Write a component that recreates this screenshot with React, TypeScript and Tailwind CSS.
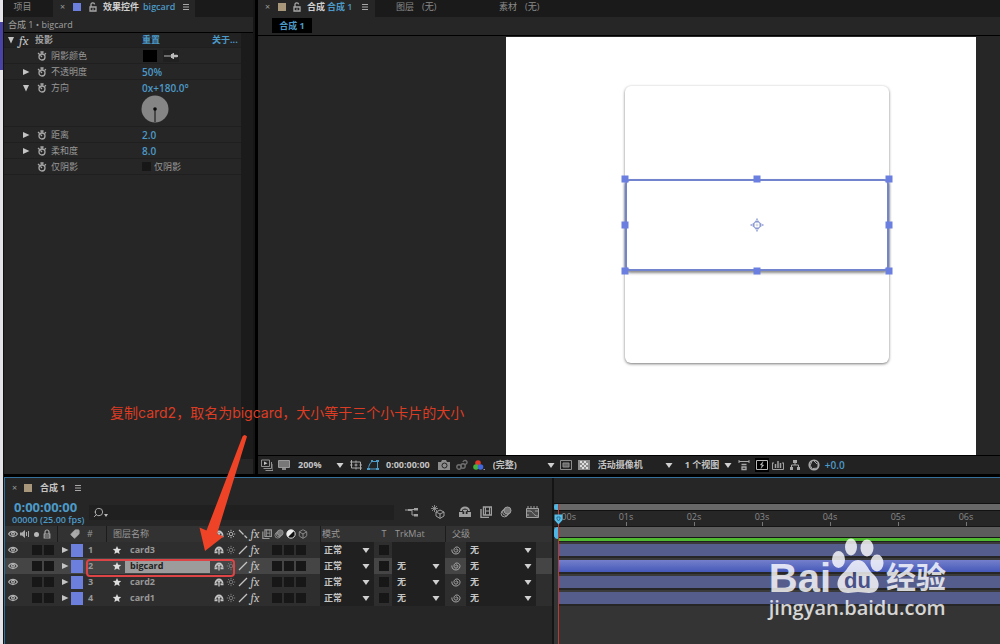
import type { ReactNode } from "react";
import { Search, Tag, Box } from "lucide-react";

const effectRows = [
  { name: "距离", value: "2.0" },
  { name: "柔和度", value: "8.0" },
];

const layers = [
  { id: 1, name: "card3", trkMat: false, selected: false },
  { id: 2, name: "bigcard", trkMat: true, selected: true },
  { id: 3, name: "card2", trkMat: true, selected: false },
  { id: 4, name: "card1", trkMat: true, selected: false },
];

const seconds = ["01s", "02s", "03s", "04s", "05s", "06s"];

const handles = [
  "left-0 top-0",
  "left-1/2 top-0",
  "left-full top-0",
  "left-0 top-1/2",
  "left-full top-1/2",
  "left-0 top-full",
  "left-1/2 top-full",
  "left-full top-full",
];

function Triangle({ open = false }: { open?: boolean }) {
  return (
    <svg viewBox="0 0 8 8" className="size-2 shrink-0 fill-[#c4c4c4]">
      {open ? <path d="M1 1h6L4 7.5z" /> : <path d="M1 1l6.5 3L1 7z" />}
    </svg>
  );
}

function Caret() {
  return (
    <svg viewBox="0 0 8 5" className="h-[5px] w-2 shrink-0 fill-[#d0d0d0]">
      <path d="M0.5 0h7L4 5z" />
    </svg>
  );
}

function Stopwatch() {
  return (
    <svg viewBox="0 0 10 10" className="size-[10px] shrink-0" fill="none" stroke="#a8a8a8" strokeWidth="1.3">
      <circle cx="5" cy="6" r="3" />
      <path d="M3.4 1h3.2M5 1v2M1 2l1.6 1.4M5 6l-1.6-1.6M8.9 2.2L7.8 3.3" />
    </svg>
  );
}

function Unlock() {
  return (
    <svg viewBox="0 0 8 10" className="h-[10px] w-2 shrink-0" fill="none" stroke="#a8a8a8" strokeWidth="1.3">
      <path d="M2 5V2.8a1.8 1.8 0 0 1 3.6-.4M1 5h6v4H1zM4 6.4v1.4" />
    </svg>
  );
}

function Padlock() {
  return (
    <svg viewBox="0 0 8 10" className="h-[10px] w-2 shrink-0" fill="none" stroke="#a8a8a8" strokeWidth="1.2">
      <path d="M2 5V3a2 2 0 0 1 4 0v2M1.2 5h5.600v4H1.200zM2 7h4" />
    </svg>
  );
}

function Menu() {
  return (
    <svg viewBox="0 0 6 8" className="h-2 w-[6px] shrink-0" stroke="#a8a8a8">
      <path d="M0 1.5h6M0 4h6M0 6.5h6" />
    </svg>
  );
}

function Eye() {
  return (
    <svg viewBox="0 0 10 8" className="h-2 w-[10px] shrink-0" fill="none" stroke="#b0b0b0" strokeWidth="1.2">
      <path d="M.6 4C2.5.4 7.5.4 9.4 4 7.5 7.4 2.5 7.4.6 4z" />
      <circle cx="5" cy="3.7" r="1.4" />
    </svg>
  );
}

function Shy() {
  return (
    <svg viewBox="0 0 10 9" className="h-[9px] w-[10px] shrink-0" fill="none" stroke="#c4c4c4">
      <path d="M1.500 5a3.500 3.500 0 0 1 7 0" strokeWidth="1.800" />
      <path d="M.5 6.200h3M6.500 6.200h3" strokeWidth="2" />
      <path d="M5 3v5.500M3.500 3.500h3" strokeWidth="1.400" />
    </svg>
  );
}

function Sun({ dim = false }: { dim?: boolean }) {
  return (
    <svg viewBox="0 0 10 10" className="size-[10px] shrink-0" fill="none" stroke={dim ? "#777" : "#b0b0b0"}>
      <circle cx="5" cy="5" r="1.8" />
      <path d="M5 .8v1.4M5 7.8v1.4M.8 5h1.4M7.8 5h1.4M2 2l1 1M7 7l1 1M8 2L7 3M3 7L2 8" />
    </svg>
  );
}

function Slash({ back = false }: { back?: boolean }) {
  return (
    <svg viewBox="0 0 10 10" className="size-[10px] shrink-0" fill="none" stroke="#c4c4c4" strokeWidth="1.3">
      {back ? <path d="M1 1l4.5 4.5M6.5 6.5L9 9" /> : <path d="M1 9l8-8" />}
    </svg>
  );
}

function Fx() {
  return <i className="w-[10px] shrink-0 text-center font-serif text-[12px] leading-none text-[#c4c4c4]">fx</i>;
}

function Spiral() {
  return (
    <svg viewBox="0 0 10 10" className="size-[10px] shrink-0" fill="none" stroke="#a8a8a8">
      <path d="M5.2 5.2c-.8-.6-.1-1.6.8-1.2 1.5.7.9 3-.8 3.1C2.700 7.200 2.300 3.700 4.200 2.500 6.500 1.100 9.200 2.900 9 5.400 8.700 8.400 5.700 9.600 3.200 8.700 1.500 8 .700 6.300.900 4.500" />
    </svg>
  );
}

function MotionBlur() {
  return (
    <svg viewBox="0 0 12 12" className="size-full" fill="none" stroke="currentColor">
      <circle cx="4.500" cy="7.500" r="3.400" />
      <circle cx="6" cy="6" r="3.400" />
      <circle cx="7.500" cy="4.500" r="3.500" fill="#777" />
    </svg>
  );
}

function Film() {
  return (
    <svg viewBox="0 0 12 12" className="size-full" fill="none" stroke="currentColor">
      <path d="M3.500 1h8v8h-8zM1 3v8.500h8" strokeWidth="1.400" />
      <path d="M5.500 1v8M9.500 1v8M5.500 5h4" />
    </svg>
  );
}

function Cell({ label }: { label: string }) {
  return (
    <input type="checkbox" aria-label={label} className="size-[10px] shrink-0 appearance-none bg-[#171717]" />
  );
}

function Drop({ label, value, className }: { label: string; value: string; className: string }) {
  return (
    <div className={`relative flex items-center ${className}`}>
      <select
        aria-label={label}
        className="w-full appearance-none bg-transparent font-bold text-[#c4c4c4] outline-none"
      >
        <option>{value}</option>
      </select>
      <span className="pointer-events-none absolute right-1">
        <Caret />
      </span>
    </div>
  );
}

function Property({ name, open, children }: { name: string; open?: boolean; children: ReactNode }) {
  return (
    <div className="flex h-[15px] items-center">
      <span className="w-[15px]">{open !== undefined && <Triangle open={open} />}</span>
      <Stopwatch />
      <span className="ml-1 w-[91px] text-[#989898]">{name}</span>
      {children}
    </div>
  );
}

function Value({ children }: { children: ReactNode }) {
  return <button className="text-[10px] font-semibold text-[#4c9ac8]">{children}</button>;
}

function EffectPanel() {
  return (
    <section className="flex w-[251px] shrink-0 flex-col border-r-2 border-[#161616] bg-[#262626]">
      <div className="flex h-[17px] bg-[#1a1a1a] pb-1">
        <button className="w-[49px] pr-3 text-[#8a8a8a]">项目</button>
        <div className="-mb-1 flex w-[142px] items-center bg-[#262626] pb-1 pl-[7px]">
          <button className="w-[13px] text-left text-[#999]">×</button>
          <span className="mr-2 size-2 bg-[#6d7fdc]" />
          <Unlock />
          <b className="ml-[6px] text-[#d0d0d0]">效果控件</b>
          <span className="ml-1 mr-2 font-semibold text-[#4c9ac8]">bigcard</span>
          <Menu />
        </div>
      </div>
      <div className="h-4 border-b border-black pl-1 leading-4 text-[#a0a0a0]">合成 1 • bigcard</div>
      <div className="mb-[15px] flex-1 border-r-[12px] border-[#1b1b1b]">
        <div className="flex h-[14px] items-center bg-[#222] pl-[3px] text-[#a0a0a0]">
          <Triangle open />
          <span className="ml-1 w-4 font-serif text-[13px] italic leading-none text-[#c4c4c4]">fx</span>
          <span className="w-[107px] font-bold">投影</span>
          <button className="w-[70px] text-left font-bold text-[#4c9ac8]">重置</button>
          <button className="font-bold text-[#4c9ac8]">关于...</button>
        </div>
        <div className="border-t border-[#1f1f1f] *:border-b *:border-[#1f1f1f] *:pl-[18px]">
          <div>
            <Property name="阴影颜色">
              <button aria-label="阴影颜色" className="ml-px h-3 w-[14px] bg-black" />
              <button aria-label="吸管" className="ml-[6px] flex h-3 w-4 items-center justify-center bg-[#202020]">
                <svg viewBox="0 0 14 6" className="h-[6px] w-[14px] fill-[#b8b8b8]">
                  <path d="M0 2.600h7V1h1.500V0H10v1.800h3a1 1 0 0 1 0 2.400h-3V6H8.500V5H7V3.600H0z" />
                </svg>
              </button>
            </Property>
          </div>
          <div>
            <Property name="不透明度" open={false}>
              <Value>50%</Value>
            </Property>
          </div>
          <div className="pb-[3px]">
            <Property name="方向" open>
              <Value>0x+180.0°</Value>
            </Property>
            <svg viewBox="0 0 28 28" className="ml-[119px] size-7">
              <circle cx="14" cy="14" r="13.500" fill="#858585" />
              <path d="M14 14v13" stroke="#0a0a0a" />
              <circle cx="14" cy="14" r="1.800" fill="#0a0a0a" />
            </svg>
          </div>
          {effectRows.map((row) => (
            <div key={row.name}>
              <Property name={row.name} open={false}>
                <Value>{row.value}</Value>
              </Property>
            </div>
          ))}
          <div>
            <Property name="仅阴影">
              <label className="flex items-center gap-[3px] text-[#989898]">
                <input type="checkbox" className="size-[9px] appearance-none bg-[#171717]" />
                仅阴影
              </label>
            </Property>
          </div>
        </div>
      </div>
    </section>
  );
}

function ViewerBar() {
  return (
    <div className="flex h-[19px] items-center overflow-hidden border-t border-black bg-[#222] pl-[3px] font-bold text-[#c4c4c4] *:shrink-0">
      <svg viewBox="0 0 12 12" className="mr-[5px] size-3" fill="none" stroke="#909090">
        <path d="M.5 1h8v6.500h-8zM10.500 3v6.500h-8M12 5v6.500H4.500" />
        <path d="M3 2.500v3.500L6.500 4.200z" fill="#c4c4c4" stroke="none" />
      </svg>
      <svg viewBox="0 0 12 10" className="mr-2 h-[10px] w-3">
        <path d="M.5.500h11v7H.5z" fill="#777" stroke="#999" />
        <path d="M4 8h4v2H4z" fill="#888" />
      </svg>
      <Drop label="缩放" value="200%" className="w-[50px]" />
      <svg viewBox="0 0 12 10" className="ml-[2px] mr-[5px] h-[10px] w-3" fill="none" stroke="#aaa">
        <path d="M1.500 2h9v6h-9zM6 3.500v3M4.500 5h3M0 2h1.500M10.500 8H12M1.500 0v2M10.500 8v2M0 5h2.500M9.500 5H12M6 .5v2M6 7.500v2" />
      </svg>
      <svg viewBox="0 0 12 10" className="mr-[7px] h-[10px] w-3" fill="none" stroke="#4c9ac8">
        <path d="M1.500 9C1.500 5 4 2 5 1.500h5.500V9z" />
        <path d="M0 8h3v2H0zM9 0h3v2H9zM9 8h3v2H9zM4 0h2v2H4z" fill="#4c9ac8" stroke="none" />
      </svg>
      <button className="mr-2">0:00:00:00</button>
      <svg viewBox="0 0 12 10" className="mr-[6px] h-[10px] w-3">
        <path d="M0 2h3l1-2h4l1 2h3v8H0z" fill="#8c8c8c" />
        <circle cx="6.500" cy="5.500" r="2.500" fill="#8c8c8c" stroke="#222" />
      </svg>
      <svg viewBox="0 0 12 12" className="mr-[5px] size-3" fill="none" stroke="#6e6e6e" strokeWidth="1.400">
        <circle cx="3" cy="8" r="2.200" />
        <circle cx="7" cy="7" r="2.200" />
        <path d="M7 3a2 2 0 1 1 4 1L9 6" />
      </svg>
      <svg viewBox="0 0 12 10" className="mr-2 h-[10px] w-3">
        <circle cx="5" cy="3" r="2.800" fill="#dd3a2b" />
        <circle cx="3" cy="7" r="2.800" fill="#45b03c" />
        <circle cx="7.500" cy="7" r="2.800" fill="#4268dd" />
        <path d="M10.500 9h1.500v1h-1.500z" fill="#999" />
      </svg>
      <Drop label="分辨率" value="(完整)" className="w-[66px]" />
      <svg viewBox="0 0 12 10" className="ml-px mr-[6px] h-[10px] w-3" fill="none" stroke="#8c8c8c">
        <path d="M.5.500h11v9H.5z" />
        <path d="M3 3h6v4H3z" fill="#666" />
      </svg>
      <svg viewBox="0 0 12 10" className="mr-2 h-[10px] w-3">
        <path d="M0 0h12v10H0z" fill="#8c8c8c" />
        <path d="M2 1h2v2H2zM6 1h2v2H6zM4 3h2v2H4zM8 3h2v2H8zM2 5h2v2H2zM6 5h2v2H6zM4 7h2v2H4zM8 7h2v2H8z" fill="#ddd" />
      </svg>
      <Drop label="视图" value="活动摄像机" className="w-[79px]" />
      <Drop label="视图数量" value="1 个视图" className="ml-2 w-[51px]" />
      <svg viewBox="0 0 12 12" className="ml-[2px] mr-[5px] size-3" fill="none" stroke="#a8a8a8">
        <path d="M1 2.500h10M1 1v3M11 1v3" />
        <path d="M3.500 5.500h5M4 8h4v2.500H4z" strokeWidth="1.300" />
      </svg>
      <button aria-label="快速预览" className="mr-[3px] flex size-[14px] items-center justify-center bg-black">
        <svg viewBox="0 0 12 10" className="h-[10px] w-3" fill="none" stroke="#b8b8b8">
          <path d="M.5.500h11v9H.5z" />
          <path d="M7 1.500L4.200 5h3.600L5 8.500z" fill="#b8b8b8" strokeWidth=".4" />
        </svg>
      </button>
      <svg viewBox="0 0 12 10" className="mr-[5px] h-[10px] w-3" fill="none" stroke="#a0a0a0">
        <path d="M.5 3v6.500h11V3M0 3h2M10 3h2" />
        <path d="M3.500 8V4M6 8V1M8.500 8V3" strokeWidth="1.500" />
      </svg>
      <svg viewBox="0 0 12 12" className="mr-[7px] size-3" fill="#a8a8a8">
        <path d="M4 1h4v3H4zM1 8h3v3H1zM8 8h3v3H8z" />
        <path d="M6 4v2M2.500 8V6h7v2" fill="none" stroke="#a8a8a8" />
      </svg>
      <svg viewBox="0 0 12 12" className="mr-[5px] size-3" fill="none" stroke="#a8a8a8">
        <circle cx="6" cy="6" r="4.800" strokeWidth="1.600" />
        <path d="M5 1l4 4M10 4v5M10 9l-5 .5M5 11L2.500 7M2 7l2-5" />
      </svg>
      <button className="text-[10px] font-semibold text-[#4c9ac8]">+0.0</button>
    </div>
  );
}

function Viewer() {
  return (
    <section className="flex min-w-0 flex-1 flex-col bg-[#262626]">
      <div className="flex h-[17px] bg-[#1a1a1a] pb-1 text-[#8a8a8a]">
        <div className="-mb-1 flex w-[117px] shrink-0 items-center bg-[#262626] pb-1 pl-[7px]">
          <button className="w-[13px] text-left text-[#999]">×</button>
          <span className="mr-[7px] size-2 bg-[#a8977a]" />
          <Unlock />
          <b className="ml-[6px] text-[#d0d0d0]">合成</b>
          <span className="ml-[2px] mr-[9px] font-semibold text-[#4c9ac8]">合成 1</span>
          <Menu />
        </div>
        <button className="ml-[21px] flex w-[103px] items-center gap-2">
          <span>图层</span>
          <span>(无)</span>
        </button>
        <button className="flex items-center gap-2">
          <span>素材</span>
          <span>(无)</span>
        </button>
      </div>
      <div className="h-[19px] border-b border-black pl-[14px] pt-px">
        <button className="block h-[15px] w-[40px] bg-black font-bold leading-[15px] text-[#4c9ac8]">合成 1</button>
      </div>
      <div className="flex flex-1 justify-end pr-6 pt-px">
        <div className="flex w-[470px] flex-col items-center bg-white pt-[49px]">
          <div className="mr-[-31px] flex h-[277px] w-[264px] flex-col justify-center rounded-[6px] shadow-[0_1px_3px_#0008]">
            <div className="relative h-[92px] w-full">
              <div className="h-full rounded-[5px] border-2 border-[#7384cf] bg-white shadow-[0_2px_3px_#0007]" />
              {handles.map((place) => (
                <span key={place} className={`absolute size-[7px] -translate-x-1/2 -translate-y-1/2 bg-[#6a7fdf] ${place}`} />
              ))}
              <svg
                viewBox="0 0 14 14"
                className="absolute left-1/2 top-1/2 size-[14px] -translate-x-1/2 -translate-y-1/2"
                fill="none"
                stroke="#8090cf"
              >
                <circle cx="7" cy="7" r="3.500" />
                <path d="M7 .5l1.500 3.500h-3zM7 13.500l1.500-3.500h-3zM.5 7l3.500 1.500v-3zM13.500 7L10 8.500v-3z" strokeWidth=".7" />
                <path d="M5.500 7h3M7 5.500v3" stroke="#bbb" strokeWidth=".6" />
              </svg>
            </div>
          </div>
        </div>
      </div>
      <ViewerBar />
    </section>
  );
}

function LayerTable() {
  return (
    <table className="w-full table-fixed border-collapse text-[#989898]">
      <colgroup>
        <col className="w-[52px]" />
        <col className="w-[27px]" />
        <col className="w-[22px]" />
        <col className="w-[107px]" />
        <col className="w-[107px]" />
        <col className="w-[56px]" />
        <col className="w-[16px]" />
        <col className="w-[53px]" />
        <col />
      </colgroup>
      <thead>
        <tr className="h-4 bg-[#323232] text-left *:p-0 *:font-normal">
          <th>
            <div className="flex items-center gap-[2px] pl-[3px]">
              <Eye />
              <svg viewBox="0 0 10 8" className="h-2 w-[10px]" fill="#aaa">
                <path d="M0 2.500h2L5 0v8L2 5.500H0z" />
                <path d="M6.500 2v4M8.500 1v6" stroke="#aaa" />
              </svg>
              <span className="mx-[2px] size-[5px] rounded-full bg-[#b8b8b8]" />
              <Padlock />
            </div>
          </th>
          <th className="shadow-[inset_1px_0_#1c1c1c]">
            <Tag className="ml-[13px] size-[10px] -scale-x-100" fill="#aaa" />
          </th>
          <th className="pl-[3px]!">#</th>
          <th className="pl-[7px]! shadow-[inset_1px_0_#1c1c1c]">图层名称</th>
          <th>
            <div className="flex items-center gap-[2px] pl-px">
              <Shy />
              <Sun />
              <Slash back />
              <Fx />
              <span className="size-[10px]"><Film /></span>
              <span className="size-[10px]"><MotionBlur /></span>
              <svg viewBox="0 0 10 10" className="size-[10px]">
                <circle cx="5" cy="5" r="4.200" fill="#111" stroke="#ddd" />
                <path d="M8 2a4.200 4.200 0 0 0-6 6z" fill="#eee" />
              </svg>
              <Box className="size-[10px]" />
            </div>
          </th>
          <th className="pl-[2px]! shadow-[inset_1px_0_#1c1c1c]">模式</th>
          <th className="text-center">T</th>
          <th className="pl-[3px]!">TrkMat</th>
          <th className="pl-[7px]! shadow-[inset_1px_0_#1c1c1c]">父级</th>
        </tr>
      </thead>
      <tbody>
        {layers.map((layer) => (
          <tr key={layer.id} className={`h-4 *:p-0 ${layer.selected ? "bg-[#454545]" : "bg-[#2e2e2e]"}`}>
            <td>
              <div className="flex items-center gap-[2px] pl-[3px]">
                <Eye />
                <span className="ml-3 flex gap-[2px]">
                  <Cell label="独奏" />
                  <Cell label="锁定" />
                </span>
              </div>
            </td>
            <td>
              <div className="flex items-center gap-[2px] pl-1">
                <Triangle />
                <span className="h-[13px] w-3 bg-[#6d7fdc]" />
              </div>
            </td>
            <td className="pl-1! font-bold">{layer.id}</td>
            <td>
              <div className="flex items-center pl-[6px]">
                <svg viewBox="0 0 10 10" className="mr-[3px] size-[10px] fill-[#ddd]">
                  <path d="M5 1l1.200 2.700 3 .3-2.200 2 .6 3L5 7.500 2.400 9 3 6 .800 4l3-.3z" />
                </svg>
                <button
                  className={`h-[14px] w-[85px] pl-[5px] text-left font-bold ${layer.selected ? "bg-[#9c9c9c] text-[#222]" : ""}`}
                >
                  {layer.name}
                </button>
              </div>
            </td>
            <td>
              <div className="flex items-center gap-[2px] pl-px">
                <Shy />
                <Sun dim />
                <Slash />
                <Fx />
                <span className="ml-[10px] flex gap-[2px]">
                  <Cell label="运动模糊" />
                  <Cell label="调整图层" />
                  <Cell label="3D 图层" />
                </span>
              </div>
            </td>
            <td>
              <Drop label="模式" value="正常" className="h-4 w-[54px] bg-[#202020] pl-1" />
            </td>
            <td>
              <div className="flex justify-center">
                <Cell label="保留透明度" />
              </div>
            </td>
            <td className="bg-[#202020]">
              {layer.trkMat && <Drop label="轨道遮罩" value="无" className="h-4 w-[52px] pl-[5px]" />}
            </td>
            <td>
              <div className="flex items-center pl-[6px]">
                <Spiral />
                <Drop label="父级" value="无" className="ml-[5px] h-4 w-[70px] bg-[#202020] pl-1" />
              </div>
            </td>
          </tr>
        ))}
      </tbody>
    </table>
  );
}

function TimeGraph() {
  return (
    <div className="relative min-w-0 flex-1 overflow-hidden border-l-2 border-[#141414] bg-[#343434]">
      <div className="h-[25px] bg-[#262626]" />
      <div className="h-2 border-y border-[#111] bg-[#686868]" />
      <div className="flex h-[15px] bg-[#262626] pl-1 text-[#8a8a8a]">
        <span className="w-[34px] pl-px leading-[11px]">:00s</span>
        {seconds.map((label) => (
          <span key={label} className="flex w-[68px] shrink-0 flex-col items-center">
            <span className="leading-[11px]">{label}</span>
            <span className="h-1 w-px bg-[#777]" />
          </span>
        ))}
      </div>
      <div className="h-[12px] border-y border-[#151515] bg-[#5c5c5c]" />
      <div className="ml-1 h-1 border-b border-[#202020] bg-[#4fb930]" />
      <div className="pl-1">
        {layers.map((layer) => (
          <div
            key={layer.id}
            className={`h-4 border-y-2 border-t-[#3a3a3a] border-b-[#262626] ${layer.selected ? "bg-linear-to-b from-[#7580cc] to-[#4558b8]" : "bg-[#555d8c]"}`}
          />
        ))}
      </div>
      <span className="absolute left-0 top-[26px] h-[6px] w-1 rounded-l-full bg-[#4fb5e3]" />
      <span className="absolute left-0 top-[49px] h-3 w-1 rounded-l bg-[#4fb5e3]" />
      <span className="absolute bottom-0 left-1 top-[26px] w-px bg-[#c0392f]" />
      <svg viewBox="0 0 9 11" className="absolute left-0 top-[36px] h-[11px] w-[9px]">
        <path d="M.5.500h8V6l-4 4.500L.5 6z" fill="#58bce8" />
        <path d="M3 3h3v2L4.500 7 3 5z" fill="none" stroke="#2d6f90" />
      </svg>
    </div>
  );
}

function Timeline() {
  return (
    <section className="flex h-[167px] border-l border-t border-[#35709a] bg-[#262626]">
      <div className="w-[547px] shrink-0">
        <div className="flex h-5 items-center pl-[7px]">
          <button className="w-[12px] text-left text-[#999]">×</button>
          <span className="mr-2 size-2 bg-[#a8977a]" />
          <b className="mr-[10px] text-[#c4c4c4]">合成 1</b>
          <Menu />
        </div>
        <div className="flex h-7 items-center">
          <div className="w-[84px] pl-[7px] text-[#4c9ac8]">
            <div className="pl-[2px] text-[13px] font-bold leading-4">0:00:00:00</div>
            <div className="whitespace-nowrap text-[9px] font-semibold leading-[10px]">00000 (25.00 fps)</div>
          </div>
          <label className="flex h-[15px] w-[305px] items-center bg-[#202020] pl-1 text-[#b8b8b8]">
            <Search className="size-[11px] -scale-x-100" />
            <svg viewBox="0 0 4 3" className="mt-[6px] h-[3px] w-1 fill-[#b8b8b8]">
              <path d="M0 0h4L2 3z" />
            </svg>
            <input aria-label="搜索" className="min-w-0 flex-1 bg-transparent outline-none" />
          </label>
          <div className="ml-[11px] flex items-center text-[#a0a0a0] *:shrink-0">
            <svg viewBox="0 0 14 12" className="mr-3 h-3 w-[14px]" fill="none" stroke="currentColor">
              <path d="M0 4h5M7 4V9h3M5 3.500h5" />
              <path d="M3 3h4v2H3zM9 2h4v2.500H9zM9 8h4v2.500H9z" fill="currentColor" stroke="none" />
            </svg>
            <svg viewBox="0 0 14 14" className="mr-[13px] size-[14px]" fill="none" stroke="currentColor">
              <path d="M9 5l4 2v4l-4 2.500L5 11V7zM5 7l4 2 4-2M9 9v4" />
              <path d="M3.500 0v7M0 3.500h7M1 1l5 5M6 1L1 6" strokeWidth=".8" />
            </svg>
            <svg viewBox="0 0 14 12" className="mr-2 h-3 w-[14px]" fill="none" stroke="currentColor">
              <path d="M3 5a4 3.500 0 0 1 8 0" strokeWidth="2" />
              <path d="M7 4v4M5 4.500h4" strokeWidth="1.500" />
              <path d="M1 6h3.500v2h5V6H13v5H1z" fill="currentColor" stroke="none" />
            </svg>
            <span className="mr-2 size-3"><Film /></span>
            <span className="mr-[14px] size-3"><MotionBlur /></span>
            <svg viewBox="0 0 13 12" className="h-3 w-[13px]" fill="none" stroke="currentColor">
              <path d="M.5 2.500h12v9H.5z" fill="#4a4a4a" />
              <path d="M2 0v3M5 0v3M8 0v3M11 0v3M1 5h3c3 0 3 5 8 5M1 9h2M9 5h3" />
            </svg>
          </div>
        </div>
        <LayerTable />
      </div>
      <TimeGraph />
    </section>
  );
}

function Annotation() {
  return (
    <div className="pointer-events-none absolute inset-0">
      <p className="absolute left-[110px] top-[403px] whitespace-nowrap font-['Inter','Noto_Sans_CJK_SC',sans-serif] text-[14px] leading-5 text-[#dc3c24]">
        复制card2，取名为bigcard，大小等于三个小卡片的大小
      </p>
      <svg viewBox="0 0 50 120" className="absolute left-[198px] top-[433px] h-[120px] w-[50px] fill-[#ee4326]">
        <path d="M44.500 3.500Q46.500.500 49 3.500L19 101l6.500 2.500L7 118 1.500 94.500l7 3z" />
      </svg>
      <div className="absolute left-[86px] top-[559px] h-[18px] w-[149px] rounded-[4px] border-2 border-[#dc4446]" />
    </div>
  );
}

function Watermark() {
  return (
    <div className="pointer-events-none absolute bottom-[22px] right-[54px] text-white opacity-80">
      <div className="flex h-[56px] items-end font-['Liberation_Sans','Noto_Sans_CJK_SC',sans-serif] font-bold">
        <span className="text-[40px] leading-8">Bai</span>
        <span className="relative h-[56px] w-[54px]">
          <svg viewBox="0 0 54 56" className="size-full fill-white">
            <ellipse cx="7.500" cy="21.500" rx="6.500" ry="8.500" />
            <ellipse cx="20" cy="9" rx="6" ry="8.500" />
            <ellipse cx="36" cy="10" rx="6.500" ry="8.500" />
            <ellipse cx="46" cy="25" rx="6.500" ry="8.500" />
            <path d="M27 22c8 0 9 9 15 14 9 8 7 19-4 19-4 0-7-1-11-1s-6 1-10 1C6 55 3 44 11 36c7-5 8-14 16-14z" />
          </svg>
          <span className="absolute bottom-px left-[13px] text-[22px] leading-6 text-[#474f85]">du</span>
        </span>
        <span className="ml-px text-[30px] leading-8">经验</span>
      </div>
      <div className="text-[20px] font-semibold leading-7">jingyan.baidu.com</div>
    </div>
  );
}

export default function App() {
  return (
    <main className="relative flex min-h-screen overflow-hidden bg-black font-['Open_Sans','Noto_Sans_CJK_SC',sans-serif] text-[9px] leading-3">
      <div className="w-1 shrink-0 border-r border-[#111] bg-[#e4e4e8]">
        <div className="mt-[22px] h-12 w-[3px] bg-[#4a43a6]" />
      </div>
      <div className="flex min-w-0 flex-1 flex-col gap-[3px]">
        <div className="flex flex-1 gap-[3px]">
          <EffectPanel />
          <Viewer />
        </div>
        <Timeline />
      </div>
      <Annotation />
      <Watermark />
    </main>
  );
}
